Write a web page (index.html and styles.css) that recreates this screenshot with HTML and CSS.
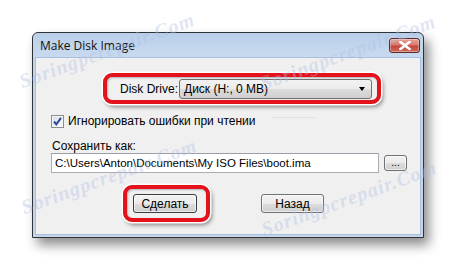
FILE: index.html
```html
<!DOCTYPE html>
<html lang="ru">
<head>
  <meta charset="UTF-8">
  <title>Make Disk Image</title>
  <link rel="stylesheet" href="styles.css">
</head>
<body>
  <div class="window">
    <div class="titlebar">
      <span class="title">Make Disk Image</span>
      <button class="close" aria-label="Close">
        <svg width="12" height="9" viewBox="0 0 12 9">
          <path d="M1.5 1 L10.5 8 M10.5 1 L1.5 8" stroke="#fff" stroke-width="2.6" stroke-linecap="square"/>
        </svg>
      </button>
    </div>

    <div class="client">
      <!-- выделение: выбор диска -->
      <div class="mark drive-mark">
        <span class="drive-label">Disk Drive:</span>
        <div class="combo">
          <span>Диск (H:, 0 MB)</span>
          <span class="arrow"></span>
        </div>
      </div>

      <div class="sep"></div>

      <label class="check-row">
        <span class="checkbox">
          <svg width="11" height="11" viewBox="0 0 11 11">
            <path d="M2 5.5 L4.3 8.3 L9 1.8" stroke="#2a4a9c" stroke-width="2" fill="none"/>
          </svg>
        </span>
        Игнорировать ошибки при чтении
      </label>

      <div class="save-label">Сохранить как:</div>
      <div class="input-row">
        <div class="path">C:\Users\Anton\Documents\My ISO Files\boot.ima</div>
        <button class="btn browse">...</button>
      </div>

      <div class="actions">
        <div class="mark make-mark">
          <button class="btn action default">Сделать</button>
        </div>
        <button class="btn action">Назад</button>
      </div>
    </div>
  </div>

  <div class="wm wm1">Soringpcrepair.Com</div>
  <div class="wm wm2">Soringpcrepair.Com</div>
  <div class="wm wm3">Soringpcrepair.Com</div>
  <div class="wm wm4">Soringpcrepair.Com</div>
</body>
</html>
```

FILE: styles.css
```css
* {
  box-sizing: border-box;
  margin: 0;
  padding: 0;
}

body {
  width: 458px;
  height: 271px;
  background: #fff;
  padding: 32px 0 0 32px;
  overflow: hidden;
  position: relative;
  font-family: 'Liberation Sans', Arial, sans-serif;
  font-size: 12px;
  color: #000;
}

.window {
  width: 392px;
  height: 206px;
  border: 1px solid #2f3336;
  border-radius: 6px 6px 0 0;
  background: #c3d6ec;
  padding: 0 2px 2px 2px;
  display: flex;
  flex-direction: column;
  box-shadow: 5px 7px 12px rgba(0, 0, 0, 0.45);
}

.titlebar {
  height: 24px;
  display: flex;
  align-items: center;
  justify-content: space-between;
  padding: 0 0 0 5px;
  background: linear-gradient(#b9cfe9, #c8daef);
  border-radius: 5px 5px 0 0;
}

.title {
  font-family: 'Open Sans', 'DejaVu Sans', sans-serif;
  font-size: 12px;
  color: #111;
}

.close {
  width: 31px;
  height: 15px;
  margin-right: 1px;
  border: 1px solid #5d2b2b;
  border-radius: 3px;
  background: linear-gradient(#e6a59a 0%, #d9786c 45%, #c2473a 55%, #cf6b5c 100%);
  display: flex;
  align-items: center;
  justify-content: center;
  box-shadow: inset 0 0 0 1px rgba(255, 255, 255, 0.35);
}

.client {
  flex: 1;
  background: #f0f0f0;
  border: 1px solid #a9c0dc;
  padding-left: 15px;
  display: flex;
  flex-direction: column;
  position: relative;
}

.mark {
  border: 4px solid #e3121b;
  border-radius: 9px;
  box-shadow: 0 0 0 1.5px #fff, 2px 3px 4px rgba(0, 0, 0, 0.45), inset 1px 1px 2px rgba(0, 0, 0, 0.25);
}

.drive-mark {
  margin: 15px 0 0 52px;
  width: 278px;
  height: 31px;
  display: flex;
  align-items: center;
  padding: 0 5px 0 13px;
}

.drive-label {
  width: 59px;
}

.combo {
  flex: 1;
  height: 20px;
  border: 1px solid #707070;
  border-radius: 3px;
  background: linear-gradient(#f2f2f2 0%, #ebebeb 50%, #dddddd 51%, #cfcfcf 100%);
  display: flex;
  align-items: center;
  justify-content: space-between;
  padding: 0 6px 0 4px;
}

.arrow {
  width: 0;
  height: 0;
  border-left: 3.5px solid transparent;
  border-right: 3.5px solid transparent;
  border-top: 4px solid #000;
}

.sep {
  position: absolute;
  left: 235px;
  top: 59px;
  width: 45px;
  height: 1px;
  background: #e2e2e2;
}

.check-row {
  margin-top: 11px;
  height: 13px;
  display: flex;
  align-items: center;
  gap: 4px;
  line-height: 13px;
}

.checkbox {
  width: 13px;
  height: 13px;
  border: 1px solid #8e8f8f;
  background: linear-gradient(135deg, #dcdcdc, #fbfbfb);
  display: flex;
  align-items: center;
  justify-content: center;
  box-shadow: inset 0 0 0 1px #f4f4f4;
}

.save-label {
  margin-top: 11px;
  line-height: 14px;
  padding-left: 1px;
}

.input-row {
  display: flex;
  align-items: center;
  gap: 5px;
  height: 20px;
}

.path {
  width: 328px;
  height: 20px;
  border: 1px solid #abadb3;
  border-top-color: #9ba0a8;
  background: #fff;
  padding: 0 3px;
  line-height: 18px;
  font-size: 11.5px;
  white-space: nowrap;
  overflow: hidden;
}

.btn {
  font-family: inherit;
  font-size: 12px;
  color: #000;
  border: 1px solid #707070;
  border-radius: 3px;
  background: linear-gradient(#f2f2f2 0%, #ebebeb 50%, #dddddd 51%, #cfcfcf 100%);
  box-shadow: inset 0 0 0 1px rgba(255, 255, 255, 0.6);
}

.browse {
  width: 23px;
  height: 16px;
  font-size: 10px;
  line-height: 12px;
}

.actions {
  margin-top: 12px;
  display: flex;
  align-items: center;
}

.make-mark {
  margin-left: 72px;
  width: 87px;
  height: 37px;
  display: flex;
  align-items: center;
  padding-left: 6px;
}

.action {
  width: 64px;
  height: 19px;
}

.default {
  border-color: #3c3c3c;
}

.actions > .action {
  margin-left: 51px;
  width: 63px;
}

.wm {
  position: absolute;
  pointer-events: none;
  font-family: 'Liberation Serif', serif;
  font-style: italic;
  font-weight: bold;
  font-size: 20px;
  letter-spacing: 1px;
  color: rgba(175, 190, 228, 0.4);
  transform: rotate(-20deg);
  transform-origin: left bottom;
  white-space: nowrap;
}

.wm1 { left: 24px; top: 70px; }
.wm2 { left: 265px; top: 72px; }
.wm3 { left: 26px; top: 196px; }
.wm4 { left: 266px; top: 218px; }
```
